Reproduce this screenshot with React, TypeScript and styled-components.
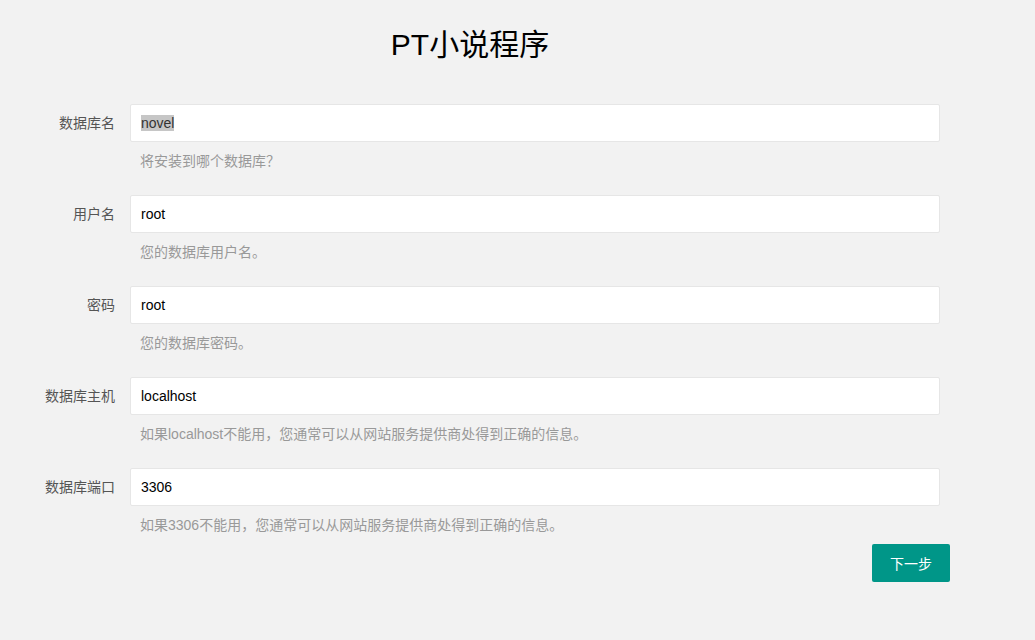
import { useEffect, useRef } from "react";
import styled, { createGlobalStyle } from "styled-components";

const GlobalStyle = createGlobalStyle`
  html, body { margin: 0; padding: 0; background: #f2f2f2; }
  body {
    font-family: "Liberation Sans", "Noto Sans CJK SC", sans-serif;
    font-size: 14px;
    color: #333;
  }
  ::selection { background: #c6c6c6; color: #333; }
`;

type Field = { label: string; value: string; aux: string };

const fields: Field[] = [
  { label: "数据库名", value: "novel", aux: "将安装到哪个数据库？" },
  { label: "用户名", value: "root", aux: "您的数据库用户名。" },
  { label: "密码", value: "root", aux: "您的数据库密码。" },
  { label: "数据库主机", value: "localhost", aux: "如果localhost不能用，您通常可以从网站服务提供商处得到正确的信息。" },
  { label: "数据库端口", value: "3306", aux: "如果3306不能用，您通常可以从网站服务提供商处得到正确的信息。" },
];

export default function App() {
  const firstInput = useRef<HTMLInputElement>(null);

  // 第一个输入框默认选中
  useEffect(() => {
    firstInput.current?.select();
  }, []);

  return (
    <Page>
      <GlobalStyle />
      <Title>PT小说程序</Title>
      <Form onSubmit={(e) => e.preventDefault()}>
        {fields.map((f, i) => (
          <FormItem key={f.label}>
            <Label>{f.label}</Label>
            <InputBlock>
              <Input ref={i === 0 ? firstInput : undefined} defaultValue={f.value} />
              <Aux>{f.aux}</Aux>
            </InputBlock>
          </FormItem>
        ))}
        <Actions>
          <Button type="submit">下一步</Button>
        </Actions>
      </Form>
    </Page>
  );
}

const Page = styled.div`
  width: 1035px;
  min-height: 640px;
`;

const Title = styled.h1`
  width: 940px;
  margin: 0 0 39px;
  padding-top: 25px;
  font-size: 30px;
  line-height: 40px;
  font-weight: 400;
  text-align: center;
  color: #000;
`;

const Form = styled.form`
  width: 930px;
  padding-left: 20px;
`;

const FormItem = styled.div`
  display: grid;
  grid-template-columns: 110px 810px;
  margin-bottom: 15px;
  &:nth-last-child(2) { margin-bottom: 0; }
`;

const Label = styled.label`
  padding: 9px 15px;
  line-height: 20px;
  text-align: right;
  color: #555;
`;

const InputBlock = styled.div`
  display: flex;
  flex-direction: column;
`;

const Input = styled.input`
  height: 38px;
  box-sizing: border-box;
  padding: 0 10px;
  border: 1px solid #e6e6e6;
  border-radius: 2px;
  background: #fff;
  font: inherit;
  font-size: 14px;
  color: #000;
  outline: none;
`;

const Aux = styled.div`
  padding: 9px 0 9px 10px;
  line-height: 20px;
  font-size: 14px;
  color: #999;
`;

const Actions = styled.div`
  display: flex;
  justify-content: flex-end;
`;

const Button = styled.button`
  height: 38px;
  padding: 0 18px;
  border: none;
  border-radius: 2px;
  background: #009688;
  color: #fff;
  font: inherit;
  font-size: 14px;
  cursor: pointer;
`;
